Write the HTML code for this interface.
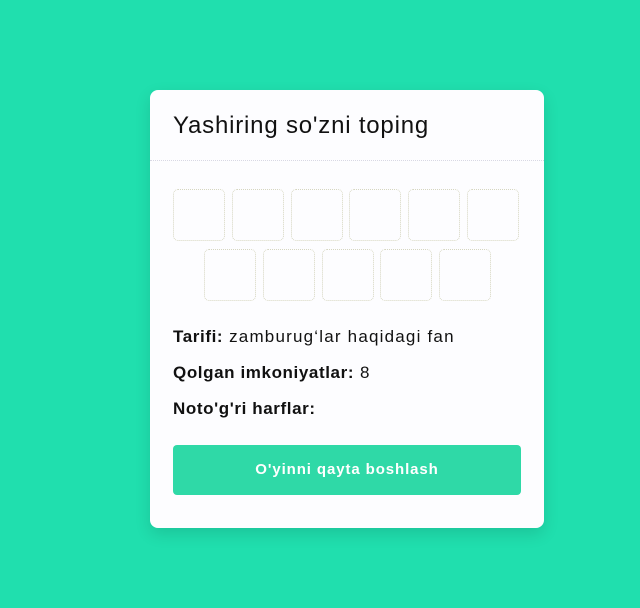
<!DOCTYPE html><html><head><style>
body{margin:0;width:640px;height:608px;background:#20dfae;font-family:"Liberation Sans",sans-serif;position:relative;overflow:hidden}
.card{position:absolute;left:150px;top:90px;width:394px;height:438px;background:#fdfdff;border-radius:8px;box-shadow:0 6px 16px rgba(0,0,0,.12)}
h1{position:absolute;left:23px;top:22px;margin:0;font-weight:normal;font-size:24px;color:#111;letter-spacing:0.8px}
.hr{position:absolute;left:0;right:0;top:70px;border-top:1px dotted #d8d8e4}
.b{position:absolute;width:50px;height:50px;border:1px dotted #d6d6c0;border-radius:5px}
.t{position:absolute;left:23px;font-size:17px;color:#111;letter-spacing:1.2px}
.t b{font-weight:bold;letter-spacing:0.6px}
.btn{position:absolute;left:23px;top:355px;width:348px;height:50px;background:#2fd9a7;border-radius:4px;color:#fff;font-weight:bold;font-size:15px;text-align:center;line-height:50px;letter-spacing:0.9px}
</style></head><body><div class="card">
<h1>Yashiring so'zni toping</h1><div class="hr"></div>
<div class="b" style="left:23px;top:99px"></div><div class="b" style="left:82px;top:99px"></div><div class="b" style="left:141px;top:99px"></div><div class="b" style="left:199px;top:99px"></div><div class="b" style="left:258px;top:99px"></div><div class="b" style="left:317px;top:99px"></div>
<div class="b" style="left:54px;top:159px"></div><div class="b" style="left:113px;top:159px"></div><div class="b" style="left:172px;top:159px"></div><div class="b" style="left:230px;top:159px"></div><div class="b" style="left:289px;top:159px"></div>
<div class="t" style="top:237px"><b>Tarifi:</b> zamburug‘lar haqidagi fan</div>
<div class="t" style="top:273px"><b>Qolgan imkoniyatlar:</b> 8</div>
<div class="t" style="top:309px"><b>Noto'g'ri harflar:</b></div>
<div class="btn">O'yinni qayta boshlash</div>
</div></body></html>
